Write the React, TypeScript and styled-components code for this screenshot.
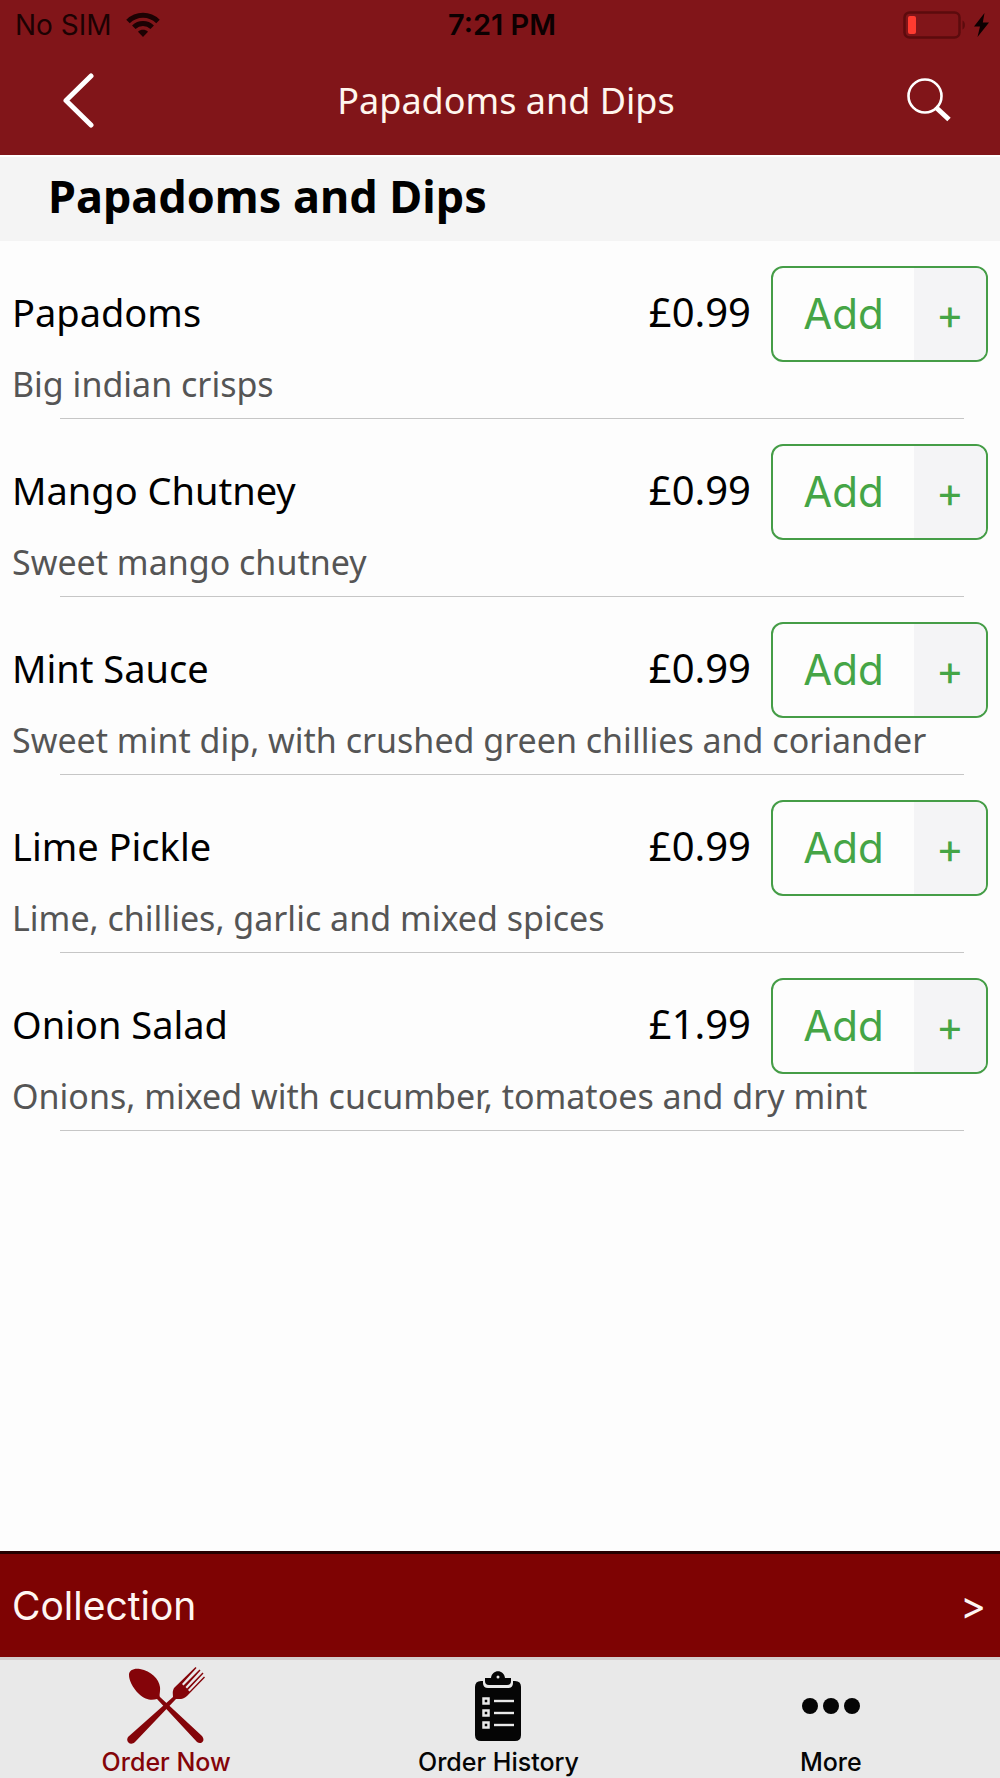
import React from "react";
import styled, { createGlobalStyle } from "styled-components";

const GlobalStyle = createGlobalStyle`
  *, *::before, *::after { box-sizing: border-box; }
  body { margin: 0; background: #fdfdfd; }
  button { margin: 0; padding: 0; border: 0; background: none; color: inherit; font: inherit; cursor: pointer; }
  h1, h2, h3, p, ul { margin: 0; padding: 0; }
  svg { display: block; }
`;

const brandFont = `"Noto Sans", "Open Sans", sans-serif`;
const systemFont = `Inter, "Liberation Sans", sans-serif`;

const Screen = styled.div`
  display: flex;
  flex-direction: column;
  min-height: 100vh;
  background: #fdfdfd;
  color: #000;
  font-family: ${brandFont};
`;

const Header = styled.header`
  background: #811519;
`;

const StatusBar = styled.div`
  display: grid;
  grid-template-columns: 1fr auto 1fr;
  align-items: center;
  height: 50px;
  padding: 0 11px 0 15px;
  color: #1c0203;
  font: 400 28px/50px ${systemFont};
`;

const StatusGroup = styled.div<{ $end?: boolean }>`
  display: flex;
  align-items: center;
  justify-content: ${(p) => (p.$end ? "flex-end" : "flex-start")};
  gap: ${(p) => (p.$end ? "8px" : "14px")};
`;

const Clock = styled.time`
  color: #0c0001;
  font-size: 29px;
  font-weight: 600;
`;

const NavBar = styled.div`
  display: grid;
  grid-template-columns: 1fr auto 1fr;
  align-items: center;
  height: 105px;
  padding: 0 48px 4px 60px;
  color: #fff6ee;
`;

const NavTitle = styled.h1`
  font-size: 36px;
  font-weight: 400;
  line-height: 48px;
`;

const IconButton = styled.button<{ $end?: boolean }>`
  justify-self: ${(p) => (p.$end ? "end" : "start")};
`;

const SectionTitle = styled.h2`
  padding: 8px 48px 14px;
  border-top: 2px solid #fff;
  background: #f4f4f4;
  font-size: 45px;
  font-weight: 700;
  line-height: 62px;
`;

const Menu = styled.ul`
  flex: 1;
  list-style: none;
`;

const MenuItem = styled.li`
  &::after {
    content: "";
    display: block;
    height: 1px;
    margin: 13px 36px 0 60px;
    background: #c6c6c6;
  }
`;

const ItemRow = styled.div`
  display: flex;
  align-items: center;
  gap: 20px;
  padding: 25px 12px 0;
`;

const ItemName = styled.h3`
  flex: 1;
  padding-bottom: 4px;
  font-size: 38px;
  font-weight: 400;
  line-height: 52px;
`;

const Price = styled.span`
  padding-bottom: 4px;
  font-size: 40px;
  line-height: 52px;
`;

const Description = styled.p`
  padding: 1px 12px 0;
  color: #555;
  font-size: 34px;
  line-height: 42px;
`;

const AddButton = styled.button`
  display: flex;
  width: 217px;
  height: 96px;
  overflow: hidden;
  border: 2px solid #459d47;
  border-radius: 12px;
  color: #45a546;
  font-family: ${systemFont};
  line-height: 92px;
`;

const AddLabel = styled.span`
  flex: 1;
  font-size: 42px;
`;

const AddPlus = styled.span`
  width: 72px;
  background: #f4f4f6;
  font-size: 42px;
`;

const CollectionBar = styled.button`
  display: flex;
  justify-content: space-between;
  align-items: center;
  width: 100%;
  height: 106px;
  padding: 0 14px 0 12px;
  border-top: 3px solid #240000;
  background: #7e0303;
  color: #fff6f2;
  font: 400 39px/48px ${systemFont};
`;

const TabBar = styled.nav`
  display: grid;
  grid-template-columns: repeat(3, 1fr);
  height: 121px;
  padding-right: 3px;
  border-top: 3px solid #d4cccc;
  background: #e9e9e9;
`;

const Tab = styled.a<{ $active?: boolean }>`
  display: flex;
  flex-direction: column;
  align-items: center;
  padding-top: 5px;
  color: ${(p) => (p.$active ? "#840409" : "#050505")};
  font: 500 25px/30px ${systemFont};
  text-decoration: none;
`;

const TabIcon = styled.span`
  display: grid;
  place-items: center;
  height: 82px;
`;

const WifiIcon = () => (
  <svg width="34" height="26" viewBox="0 0 34 26" fill="none" stroke="currentColor" strokeWidth="5">
    <path d="M2 9.5C10.500 1.200 23.500 1.200 32 9.500" />
    <path d="M7.800 15.300C13 10.300 21 10.300 26.200 15.300" />
    <path d="M17 25l-5-5.200c2.800-2.600 7.200-2.600 10 0z" fill="currentColor" stroke="none" />
  </svg>
);

const BatteryIcon = () => (
  <svg width="63" height="28" viewBox="0 0 63 28">
    <rect x="1.500" y="1.500" width="55" height="25" rx="5" fill="none" stroke="#5c0b0d" strokeWidth="2.500" />
    <rect x="5" y="5" width="8" height="18" rx="2" fill="#ff3b30" />
    <path d="M59.500 9.500c3.200 1.500 3.200 7.500 0 9z" fill="#5c0b0d" />
  </svg>
);

const BoltIcon = () => (
  <svg width="15" height="24" viewBox="0 0 15 24" fill="#0c0001">
    <path d="M10.500 0L0 13.500h6L3.500 24L15 9.500H8.800z" />
  </svg>
);

const BackIcon = () => (
  <svg width="38" height="56" viewBox="0 0 38 56" fill="none" stroke="#fff" strokeWidth="5" strokeLinecap="round" strokeLinejoin="round">
    <path d="M31 3L6 27.500L31 52" />
  </svg>
);

const SearchIcon = () => (
  <svg width="46" height="46" viewBox="0 0 46 46" fill="none" stroke="#fff">
    <circle cx="19" cy="18" r="16.500" strokeWidth="2.600" />
    <path d="M29.500 29L43 41.500" strokeWidth="5" />
  </svg>
);

const CutleryIcon = () => (
  <svg width="80" height="80" viewBox="0 0 80 80" fill="currentColor">
    <path d="M3 9C3 4 8 2 14 3C25 5 33 13 34 21C34.500 26 33 29 34 31L76 70C80 75 75 79 71 76L31 33C27 34 20 35 13 28C6 21 3 14 3 9Z" />
    <path d="M2 71L47 31C47 28 46 26 48 22L69.500 1L70.500 2L56 18L57.500 19.500L73.500 3.500L74.500 4.500L59.500 21L61 22.500L76.500 6.500L77.500 7.500L62 24L63.500 25.500L78 10.500L79 11.500L61 30C57 34 53 33 50 33L9 76C5 80-1 76 2 71Z" />
  </svg>
);

const ClipboardIcon = () => (
  <svg width="48" height="72" viewBox="0 0 48 72">
    <path d="M7 11H41Q47 11 47 17V65Q47 71 41 71H7Q1 71 1 65V17Q1 11 7 11Z" fill="currentColor" />
    <path d="M9 9H39V13Q39 18 34 18H14Q9 18 9 13Z" fill="#e9e9e9" />
    <path d="M11 8H17C18-1 30-1 31 8H37V11Q37 15 33 15H15Q11 15 11 11Z" fill="currentColor" />
    <circle cx="24" cy="7" r="1.500" fill="#e9e9e9" />
    {[31, 43, 55].map((y) => (
      <g key={y} fill="none" stroke="#e9e9e9">
        <rect x="9.500" y={y - 2.5} width="5" height="5" strokeWidth="2.500" />
        <path d={`M20 ${y}H40`} strokeWidth="2.400" />
      </g>
    ))}
  </svg>
);

const MoreIcon = () => (
  <svg width="60" height="18" viewBox="0 0 60 18" fill="currentColor">
    <circle cx="9" cy="9" r="8" />
    <circle cx="30" cy="9" r="8" />
    <circle cx="51" cy="9" r="8" />
  </svg>
);

const items = [
  { name: "Papadoms", price: "£0.99", description: "Big indian crisps" },
  { name: "Mango Chutney", price: "£0.99", description: "Sweet mango chutney" },
  { name: "Mint Sauce", price: "£0.99", description: "Sweet mint dip, with crushed green chillies and coriander" },
  { name: "Lime Pickle", price: "£0.99", description: "Lime, chillies, garlic and mixed spices" },
  { name: "Onion Salad", price: "£1.99", description: "Onions, mixed with cucumber, tomatoes and dry mint" },
];

export default function App() {
  return (
    <Screen>
      <GlobalStyle />
      <Header>
        <StatusBar>
          <StatusGroup>
            <span>No SIM</span>
            <WifiIcon />
          </StatusGroup>
          <Clock>7:21 PM</Clock>
          <StatusGroup $end>
            <BatteryIcon />
            <BoltIcon />
          </StatusGroup>
        </StatusBar>
        <NavBar>
          <IconButton aria-label="Back">
            <BackIcon />
          </IconButton>
          <NavTitle>Papadoms and Dips</NavTitle>
          <IconButton $end aria-label="Search">
            <SearchIcon />
          </IconButton>
        </NavBar>
      </Header>
      <SectionTitle>Papadoms and Dips</SectionTitle>
      <Menu>
        {items.map((item) => (
          <MenuItem key={item.name}>
            <ItemRow>
              <ItemName>{item.name}</ItemName>
              <Price>{item.price}</Price>
              <AddButton>
                <AddLabel>Add</AddLabel>
                <AddPlus>+</AddPlus>
              </AddButton>
            </ItemRow>
            <Description>{item.description}</Description>
          </MenuItem>
        ))}
      </Menu>
      <CollectionBar>
        <span>Collection</span>
        <span>&gt;</span>
      </CollectionBar>
      <TabBar>
        <Tab href="#order" $active>
          <TabIcon><CutleryIcon /></TabIcon>
          Order Now
        </Tab>
        <Tab href="#history">
          <TabIcon><ClipboardIcon /></TabIcon>
          Order History
        </Tab>
        <Tab href="#more">
          <TabIcon><MoreIcon /></TabIcon>
          More
        </Tab>
      </TabBar>
    </Screen>
  );
}
